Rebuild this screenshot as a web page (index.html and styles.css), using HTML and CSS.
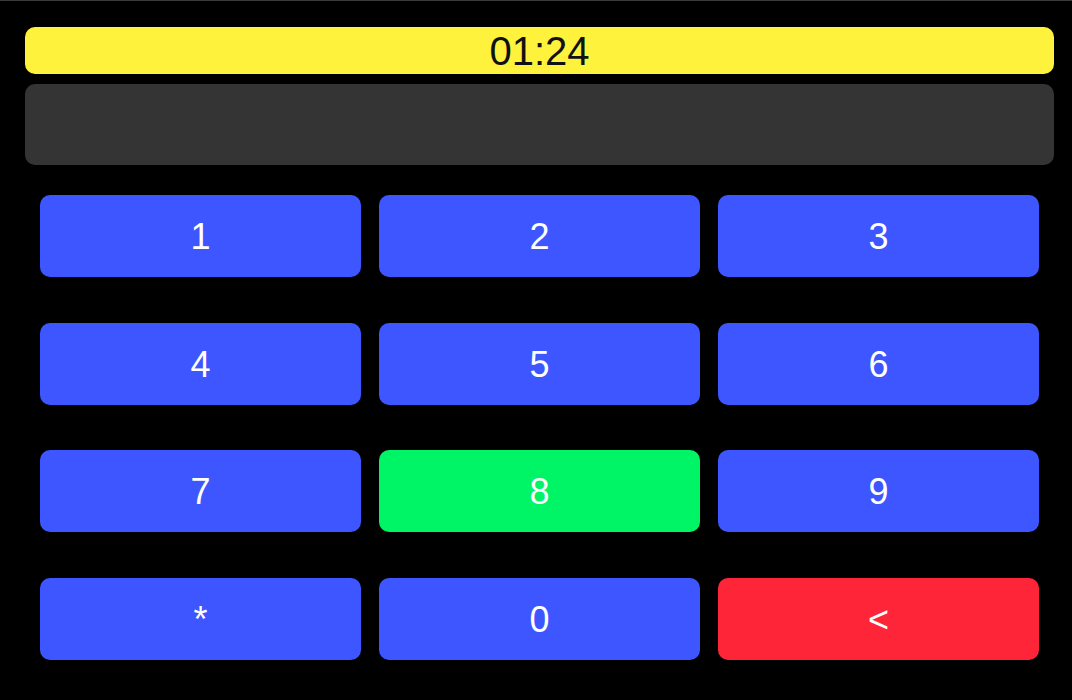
FILE: index.html
```html
<!DOCTYPE html>
<html>
<head>
<meta charset="utf-8">
<link rel="stylesheet" href="styles.css">
</head>
<body>
<div class="app">
  <div class="timer">01:24</div>
  <div class="display"></div>
  <div class="keypad">
    <div class="key">1</div>
    <div class="key">2</div>
    <div class="key">3</div>
    <div class="key">4</div>
    <div class="key">5</div>
    <div class="key">6</div>
    <div class="key">7</div>
    <div class="key key-green">8</div>
    <div class="key">9</div>
    <div class="key">*</div>
    <div class="key">0</div>
    <div class="key key-red">&lt;</div>
  </div>
</div>
</body>
</html>
```
FILE: styles.css
```css
html, body {
  margin: 0;
  padding: 0;
  background: #000;
  height: 100%;
}
body {
  border-top: 1px solid #3a3a3a;
  box-sizing: border-box;
  font-family: "Liberation Sans", Arial, sans-serif;
}
.app {
  padding: 26px 18px 0 25px;
  display: flex;
  flex-direction: column;
}
.timer {
  height: 47px;
  background: #fff23c;
  border-radius: 10px;
  color: #111;
  font-size: 40px;
  line-height: 48px;
  text-align: center;
}
.display {
  margin-top: 10px;
  height: 81px;
  background: #343434;
  border-radius: 10px;
}
.keypad {
  margin-top: 30px;
  padding: 0 15px;
  display: grid;
  grid-template-columns: repeat(3, 1fr);
  grid-template-rows: repeat(4, 82px);
  column-gap: 18px;
  row-gap: 45.5px;
}
.key {
  background: #3d56ff;
  border-radius: 10px;
  color: #fff;
  font-size: 36px;
  padding-top: 2px;
  box-sizing: border-box;
  display: flex;
  align-items: center;
  justify-content: center;
}
.key-green {
  background: #00f566;
}
.key-red {
  background: #ff2539;
}
```
